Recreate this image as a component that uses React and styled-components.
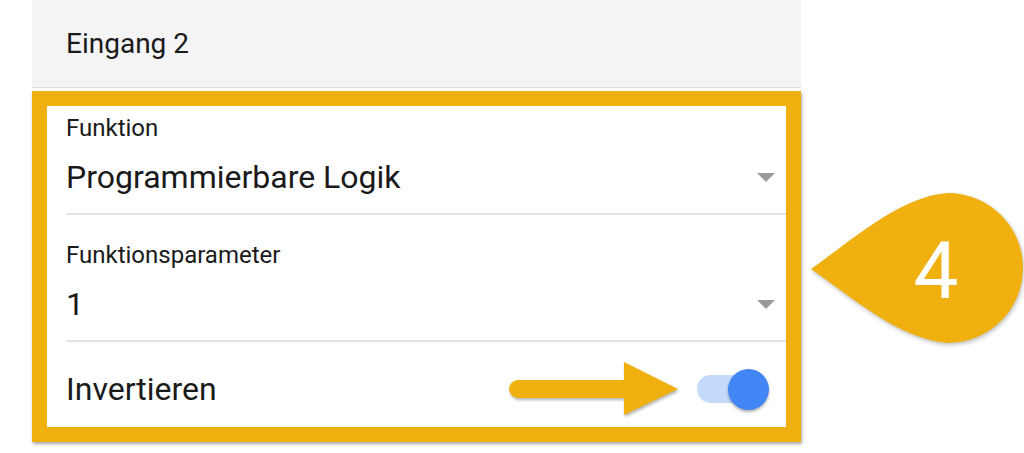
import React from "react";
import styled, { createGlobalStyle } from "styled-components";

const GlobalStyle = createGlobalStyle`
  body {
    margin: 0;
    background: #ffffff;
    font-family: Roboto, "Liberation Sans", sans-serif;
    color: #1a1a1a;
  }
`;

const Page = styled.div`
  position: relative;
  width: 1024px;
  height: 453px;
  overflow: hidden;
  padding-left: 32px;
  box-sizing: border-box;
`;

const Column = styled.div`
  width: 769px;
  display: flex;
  flex-direction: column;
`;

const Header = styled.div`
  height: 87px;
  display: flex;
  align-items: center;
  padding-left: 34px;
  background: #f4f4f4;
  border-bottom: 1px solid #dedede;
  font-size: 28px;
`;

const Frame = styled.div`
  margin-top: 3px;
  border: 15px solid #f0b010;
  box-shadow: 1px 2px 3px rgba(0, 0, 0, 0.35);
  background: #ffffff;
  display: flex;
  flex-direction: column;
`;

const Field = styled.div`
  margin-left: 19px;
  padding-top: ${(p) => (p.$first ? "8px" : "26px")};
  padding-bottom: 17px;
  border-bottom: 2px solid #e3e3e3;
`;

const Label = styled.div`
  font-size: 24px;
  line-height: 28px;
`;

const ValueRow = styled.div`
  margin-top: 17px;
  display: flex;
  align-items: center;
  justify-content: space-between;
  font-size: 32px;
  line-height: 37px;
`;

const Caret = styled.span`
  width: 0;
  height: 0;
  margin-right: 11px;
  border-left: 9.5px solid transparent;
  border-right: 9.5px solid transparent;
  border-top: 9px solid #9a9a9a;
`;

const SwitchRow = styled.div`
  margin-left: 19px;
  height: 85px;
  padding-top: 9px;
  box-sizing: border-box;
  display: flex;
  align-items: center;
  justify-content: space-between;
  font-size: 32px;
  line-height: 40px;
`;

const Track = styled.div`
  position: relative;
  width: 68px;
  height: 28px;
  margin-right: 21px;
  border-radius: 14px;
  background: ${(p) => (p.$on ? "#c5d9fb" : "#d6d6d6")};
`;

const Knob = styled.div`
  position: absolute;
  top: -6.5px;
  right: ${(p) => (p.$on ? "-4px" : "31px")};
  width: 41px;
  height: 41px;
  border-radius: 50%;
  background: ${(p) => (p.$on ? "#4285f4" : "#fafafa")};
  box-shadow: 0 2px 3px rgba(0, 0, 0, 0.3);
`;

const Pointer = styled.svg`
  position: absolute;
  left: 505px;
  top: 358px;
  filter: drop-shadow(1px 2px 1.5px rgba(0, 0, 0, 0.3));
`;

const Callout = styled.svg`
  position: absolute;
  left: 805px;
  top: 190px;
  filter: drop-shadow(1px 2px 2px rgba(0, 0, 0, 0.25));
`;

const Select = ({ label, value, first }) => (
  <Field $first={first}>
    <Label>{label}</Label>
    <ValueRow>
      <span>{value}</span>
      <Caret />
    </ValueRow>
  </Field>
);

const App = () => (
  <Page>
    <GlobalStyle />
    <Column>
      <Header>Eingang 2</Header>
      <Frame>
        <Select first label="Funktion" value="Programmierbare Logik" />
        <Select label="Funktionsparameter" value="1" />
        <SwitchRow>
          <span>Invertieren</span>
          <Track $on>
            <Knob $on />
          </Track>
        </SwitchRow>
      </Frame>
    </Column>

    <Pointer width="180" height="62" viewBox="0 0 180 62">
      <path
        d="M13 22 H125 V40 H13 A9 9 0 0 1 13 22 Z M119 4 L173 31 L119 57 Z"
        fill="#f0b010"
      />
    </Pointer>

    <Callout width="219" height="160" viewBox="0 0 219 160">
      <path
        d="M6 79 C45 52 95 6 143 3 A75 75 0 0 1 218 78 A75 75 0 0 1 143 153 C95 150 45 106 6 79 Z"
        fill="#f0b010"
      />
      <text
        x="131"
        y="108"
        textAnchor="middle"
        fill="#ffffff"
        fontSize="80"
        fontWeight="400"
        fontFamily="Roboto, 'Liberation Sans', sans-serif"
      >
        4
      </text>
    </Callout>
  </Page>
);

export default App;
